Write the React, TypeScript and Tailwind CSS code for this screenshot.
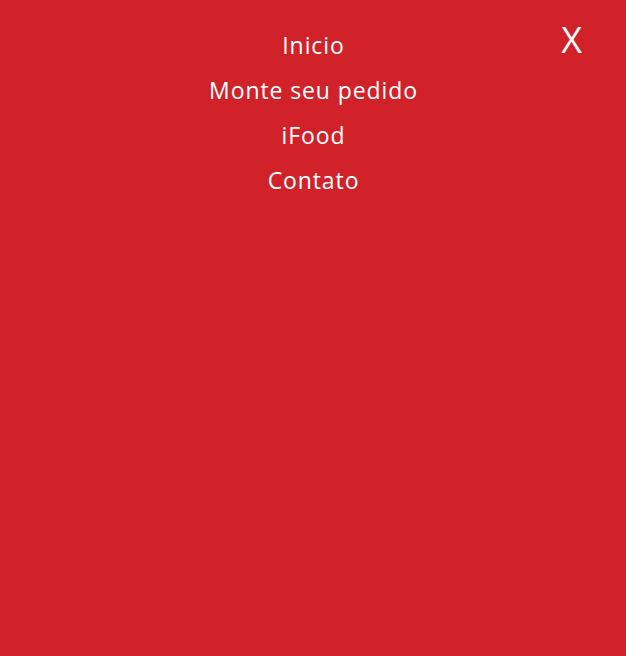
import React from "react";

export default function App() {
  const items = ["Inicio", "Monte seu pedido", "iFood", "Contato"];
  return (
    <div className="relative w-[626px] h-[656px] bg-[#d12229] text-white" style={{ fontFamily: '"Open Sans", "Liberation Sans", sans-serif' }}>
      <button className="absolute right-[44px] top-[22px] text-[36px] leading-none font-normal text-white">X</button>
      <nav className="flex flex-col items-center pt-[28px]">
        {items.map((t) => (
          <a key={t} className="h-[45px] text-[23px] leading-[34px] tracking-[0.9px] font-normal pl-[1px]">{t}</a>
        ))}
      </nav>
    </div>
  );
}
